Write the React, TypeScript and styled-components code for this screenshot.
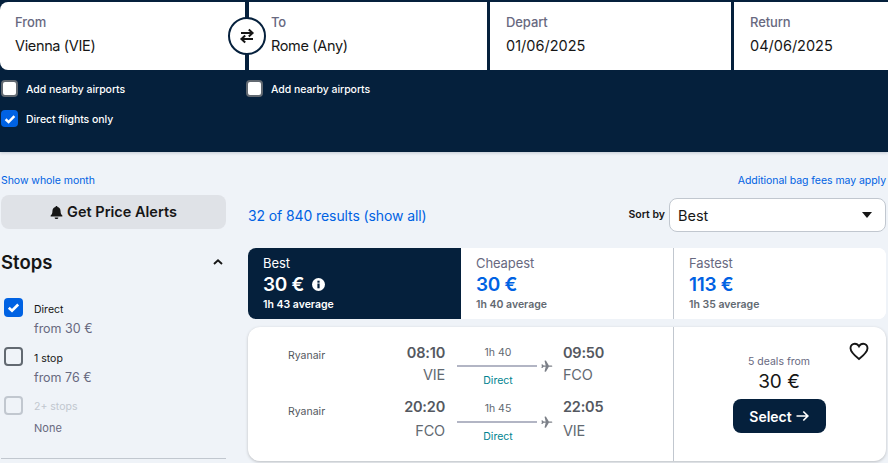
import styled, { createGlobalStyle } from "styled-components";

const GlobalStyle = createGlobalStyle`
  html, body {
    margin: 0;
    padding: 0;
    background: #ffffff;
  }
  body {
    font-family: Inter, "Noto Sans", "Liberation Sans", sans-serif;
    color: #161616;
  }
  * {
    box-sizing: border-box;
  }
`;

const fields = [
  { label: "From", value: "Vienna (VIE)", width: 245 },
  { label: "To", value: "Rome (Any)", width: 238 },
  { label: "Depart", value: "01/06/2025", width: 241 },
  { label: "Return", value: "04/06/2025", width: 154 },
];

const tabs = [
  { name: "Best", price: "30 €", average: "1h 43 average", active: true },
  { name: "Cheapest", price: "30 €", average: "1h 40 average", active: false },
  { name: "Fastest", price: "113 €", average: "1h 35 average", active: false },
];

const legs = [
  { depart: "08:10", from: "VIE", duration: "1h 40", arrive: "09:50", to: "FCO" },
  { depart: "20:20", from: "FCO", duration: "1h 45", arrive: "22:05", to: "VIE" },
];

const stops = [
  { name: "Direct", note: "from 30 €", state: "checked" },
  { name: "1 stop", note: "from 76 €", state: "open" },
  { name: "2+ stops", note: "None", state: "disabled" },
];

function CheckMark({ size }: { size: number }) {
  return (
    <svg width={size} height={size} viewBox="0 0 16 16" fill="none">
      <path d="M3 8.3l3.4 3.2L13 4.8" stroke="#fff" strokeWidth="2.8" />
    </svg>
  );
}

function Plane() {
  return (
    <svg width="12" height="12" viewBox="0 0 12 12" fill="#7c8088">
      <path d="M0.3 4.6l1-.3 1.5 1.2h2L3.6.6 5 .3l3 5.1h2.4c.7 0 1.3.3 1.3.7s-.6.7-1.3.7H8l-3 5-1.4-.3 1.2-4.8h-2L1.3 8 .3 7.7 1 6.1z" />
    </svg>
  );
}

export default function App() {
  return (
    <Page>
      <GlobalStyle />
      <Header>
        <Fields>
          {fields.map((field, i) => (
            <Field key={field.label} $width={field.width} $first={i === 0} $inset={i === 1 ? 22 : i === 0 ? 15 : 16}>
              <FieldLabel>{field.label}</FieldLabel>
              <FieldValue $tight={i < 2}>{field.value}</FieldValue>
            </Field>
          ))}
          <SwapButton>
            <svg width="18" height="18" viewBox="0 0 18 18" fill="none" stroke="#161616" strokeWidth="2">
              <path d="M3 6h11.5M10.8 2.4L14.6 6l-3.8 3.6" />
              <path d="M15 12H3.5M7.2 8.4L3.4 12l3.8 3.6" />
            </svg>
          </SwapButton>
        </Fields>
        <Options>
          <OptionColumn>
            <Option>
              <HeaderBox />
              <OptionText>Add nearby airports</OptionText>
            </Option>
            <Option>
              <HeaderBox $checked>
                <CheckMark size={14} />
              </HeaderBox>
              <OptionText>Direct flights only</OptionText>
            </Option>
          </OptionColumn>
          <OptionColumn>
            <Option>
              <HeaderBox />
              <OptionText>Add nearby airports</OptionText>
            </Option>
          </OptionColumn>
        </Options>
      </Header>
      <Main>
        <Sidebar>
          <SmallLink>Show whole month</SmallLink>
          <AlertButton>
            <svg width="13" height="15" viewBox="0 0 14 15" fill="#161616">
              <path d="M7 0.6c.7 0 1.1.5 1.1 1.1 2.2.5 3.3 2.3 3.3 4.4 0 2.4.8 3.6 1.9 4.7v1H.7v-1c1.1-1.1 1.9-2.3 1.9-4.7 0-2.1 1.1-3.9 3.3-4.4C5.9 1.1 6.3.6 7 .6zM5 12.9h4c0 1-.9 1.7-2 1.7s-2-.7-2-1.7z" />
            </svg>
            <AlertLabel>Get Price Alerts</AlertLabel>
          </AlertButton>
          <StopsHeader>
            <StopsTitle>Stops</StopsTitle>
            <svg width="12" height="12" viewBox="0 0 12 12" fill="none" stroke="#161616" strokeWidth="1.9">
              <path d="M2 8l4-3.7L10 8" />
            </svg>
          </StopsHeader>
          <StopList>
            {stops.map((stop) => (
              <StopRow key={stop.name}>
                <StopBox $state={stop.state}>
                  {stop.state === "checked" && <CheckMark size={15} />}
                </StopBox>
                <StopText $disabled={stop.state === "disabled"}>
                  <StopName $disabled={stop.state === "disabled"}>{stop.name}</StopName>
                  <StopNote $small={stop.state === "disabled"}>{stop.note}</StopNote>
                </StopText>
              </StopRow>
            ))}
          </StopList>
          <SideDivider />
        </Sidebar>
        <Results>
          <BagNotice>
            <SmallLink>Additional bag fees may apply</SmallLink>
          </BagNotice>
          <SummaryRow>
            <ResultCount>32 of 840 results (show all)</ResultCount>
            <SortGroup>
              <SortLabel>Sort by</SortLabel>
              <SortSelect>
                Best
                <svg width="10" height="6" viewBox="0 0 10 6" fill="#161616">
                  <path d="M0 0h10L5 6z" />
                </svg>
              </SortSelect>
            </SortGroup>
          </SummaryRow>
          <Tabs>
            {tabs.map((tab) => (
              <Tab key={tab.name} $active={tab.active}>
                <TabName $active={tab.active}>{tab.name}</TabName>
                <TabPrice $active={tab.active}>
                  {tab.price}
                  {tab.active && (
                    <svg width="13" height="13" viewBox="0 0 13 13">
                      <circle cx="6.5" cy="6.5" r="6.5" fill="#fff" />
                      <rect x="5.4" y="5.5" width="2.2" height="4.8" fill="#05203c" />
                      <rect x="5.4" y="2.7" width="2.2" height="2" fill="#05203c" />
                    </svg>
                  )}
                </TabPrice>
                <TabAverage $active={tab.active}>{tab.average}</TabAverage>
              </Tab>
            ))}
          </Tabs>
          <Card>
            <Legs>
              {legs.map((leg) => (
                <Leg key={leg.depart}>
                  <Airline>Ryanair</Airline>
                  <TimeColumn $end>
                    <Time>{leg.depart}</Time>
                    <Code>{leg.from}</Code>
                  </TimeColumn>
                  <Route>
                    <Duration>{leg.duration}</Duration>
                    <RouteLine>
                      <Line />
                      <Plane />
                    </RouteLine>
                    <DirectLabel>Direct</DirectLabel>
                  </Route>
                  <TimeColumn>
                    <Time>{leg.arrive}</Time>
                    <Code>{leg.to}</Code>
                  </TimeColumn>
                </Leg>
              ))}
            </Legs>
            <PricePanel>
              <FavouriteIcon width="20" height="19" viewBox="0 0 20 19" fill="none" stroke="#161616" strokeWidth="1.9">
                <path d="M10 17C5 13 1.5 10 1.5 6.2 1.5 3.5 3.5 1.7 5.8 1.7c1.8 0 3.3 1 4.2 2.6.9-1.6 2.4-2.6 4.2-2.6 2.3 0 4.3 1.8 4.3 4.5C18.5 10 15 13 10 17z" />
              </FavouriteIcon>
              <Deals>5 deals from</Deals>
              <Price>30 €</Price>
              <SelectButton>
                Select
                <svg width="13" height="12" viewBox="0 0 13 12" fill="none" stroke="#fff" strokeWidth="1.7">
                  <path d="M0.5 6h11M7.3 1.5L11.8 6l-4.500 4.500" />
                </svg>
              </SelectButton>
            </PricePanel>
          </Card>
        </Results>
      </Main>
    </Page>
  );
}

const Page = styled.div`
  width: 888px;
  height: 463px;
  overflow: hidden;
  background: #eff3f8;
`;

const Header = styled.header`
  height: 152px;
  padding-top: 2px;
  background: #05203c;
  box-shadow: 0 1px 3px rgba(5, 32, 60, 0.2);
`;

const Fields = styled.div`
  position: relative;
  display: flex;
  gap: 3px;
  height: 68px;
`;

const Field = styled.div<{ $width: number; $first: boolean; $inset: number }>`
  width: ${(p) => p.$width}px;
  padding: 12px 0 0 ${(p) => p.$inset}px;
  background: #ffffff;
  border-radius: ${(p) => (p.$first ? "8px 0 0 8px" : "0")};
  &:nth-child(2) {
    margin-left: 1px;
  }
`;

const FieldLabel = styled.div`
  font-size: 13px;
  line-height: 17px;
  font-weight: 500;
  letter-spacing: -0.1px;
  color: #68697f;
`;

const FieldValue = styled.div<{ $tight: boolean }>`
  margin-top: 5px;
  font-size: 14.5px;
  line-height: 20px;
  letter-spacing: ${(p) => (p.$tight ? "-0.35px" : "0")};
  color: #161616;
`;

const SwapButton = styled.div`
  position: absolute;
  left: 228px;
  top: 15px;
  width: 38px;
  height: 38px;
  display: flex;
  align-items: center;
  justify-content: center;
  background: #ffffff;
  border: 2px solid #05203c;
  border-radius: 50%;
`;

const Options = styled.div`
  display: flex;
  padding: 10px 0 0 1px;
`;

const OptionColumn = styled.div`
  width: 245px;
  display: flex;
  flex-direction: column;
  gap: 13px;
`;

const Option = styled.label`
  display: flex;
  align-items: center;
  gap: 8px;
  height: 17px;
`;

const OptionText = styled.span`
  padding-top: 2px;
  font-size: 10.5px;
  font-weight: 500;
  letter-spacing: -0.05px;
  color: #ffffff;
`;

const HeaderBox = styled.span<{ $checked?: boolean }>`
  width: 17px;
  height: 17px;
  display: flex;
  align-items: center;
  justify-content: center;
  border-radius: 4px;
  background: ${(p) => (p.$checked ? "#0062e3" : "#ffffff")};
  border: ${(p) => (p.$checked ? "none" : "2px solid #626971")};
`;

const Main = styled.main`
  display: flex;
  gap: 22px;
  padding: 22px 2px 0 1px;
`;

const Sidebar = styled.aside`
  width: 225px;
`;

const SmallLink = styled.div`
  height: 13px;
  font-size: 10.5px;
  line-height: 13px;
  letter-spacing: -0.05px;
  color: #0062e3;
`;

const AlertButton = styled.div`
  height: 34px;
  margin-top: 8px;
  display: flex;
  align-items: center;
  justify-content: center;
  gap: 4px;
  background: #dfe2e7;
  border-radius: 8px;
`;

const AlertLabel = styled.span`
  font-size: 14.5px;
  line-height: 16px;
  font-weight: 600;
`;

const StopsHeader = styled.div`
  margin-top: 21px;
  height: 24px;
  display: flex;
  align-items: center;
  justify-content: space-between;
  padding-right: 2px;
`;

const StopsTitle = styled.h3`
  margin: 0;
  font-size: 18.5px;
  font-weight: 600;
`;

const StopList = styled.div`
  margin-top: 24px;
  padding-left: 3px;
  display: flex;
  flex-direction: column;
  gap: 9px;
`;

const StopRow = styled.div`
  display: flex;
  gap: 11px;
  height: 40px;
`;

const StopBox = styled.span<{ $state: string }>`
  width: 19px;
  height: 19px;
  display: flex;
  align-items: center;
  justify-content: center;
  border-radius: 4px;
  background: ${(p) => (p.$state === "checked" ? "#0062e3" : "transparent")};
  border: ${(p) =>
    p.$state === "checked"
      ? "none"
      : p.$state === "open"
        ? "2px solid #626971"
        : "2px solid #c1c7cf"};
`;

const StopText = styled.div<{ $disabled: boolean }>`
  padding-top: ${(p) => (p.$disabled ? "4px" : "5px")};
`;

const StopName = styled.div<{ $disabled: boolean }>`
  font-size: 10.5px;
  line-height: 14px;
  color: ${(p) => (p.$disabled ? "#c1c7cf" : "#161616")};
`;

const StopNote = styled.div<{ $small: boolean }>`
  margin-top: ${(p) => (p.$small ? "6px" : "4px")};
  font-size: ${(p) => (p.$small ? "11px" : "12.5px")};
  line-height: 16px;
  color: #68697f;
`;

const SideDivider = styled.div`
  margin-top: 22px;
  height: 1px;
  background: #c1c7cf;
`;

const Results = styled.section`
  width: 638px;
`;

const BagNotice = styled.div`
  display: flex;
  justify-content: flex-end;
`;

const SummaryRow = styled.div`
  margin-top: 11px;
  height: 34px;
  display: flex;
  align-items: center;
  justify-content: space-between;
`;

const ResultCount = styled.div`
  font-size: 14px;
  letter-spacing: -0.1px;
  color: #0062e3;
`;

const SortGroup = styled.div`
  display: flex;
  align-items: center;
  gap: 4px;
`;

const SortLabel = styled.span`
  margin-top: -2px;
  font-size: 10.5px;
  font-weight: 600;
`;

const SortSelect = styled.div`
  width: 217px;
  height: 34px;
  padding: 0 13px 0 8px;
  display: flex;
  align-items: center;
  justify-content: space-between;
  font-size: 14.5px;
  background: #ffffff;
  border: 1px solid #c1c7cf;
  border-radius: 8px;
`;

const Tabs = styled.div`
  margin-top: 16px;
  height: 71px;
  display: grid;
  grid-template-columns: 213px 212px 213px;
  background: #ffffff;
  border-radius: 8px;
  overflow: hidden;
`;

const Tab = styled.div<{ $active: boolean }>`
  padding: 7px 0 0 15px;
  background: ${(p) => (p.$active ? "#05203c" : "#ffffff")};
  &:last-child {
    border-left: 1px solid #c1c7cf;
  }
`;

const TabName = styled.div<{ $active: boolean }>`
  font-size: 13px;
  line-height: 16px;
  letter-spacing: -0.1px;
  color: ${(p) => (p.$active ? "#ffffff" : "#68697f")};
`;

const TabPrice = styled.div<{ $active: boolean }>`
  margin-top: 1px;
  height: 24px;
  display: flex;
  align-items: center;
  gap: 8px;
  font-size: 19px;
  font-weight: 600;
  letter-spacing: -0.3px;
  color: ${(p) => (p.$active ? "#ffffff" : "#0062e3")};
`;

const TabAverage = styled.div<{ $active: boolean }>`
  margin-top: 2px;
  font-size: 10.5px;
  line-height: 14px;
  font-weight: 600;
  color: ${(p) => (p.$active ? "#ffffff" : "#626971")};
`;

const Card = styled.article`
  margin-top: 8px;
  height: 134px;
  display: flex;
  background: #ffffff;
  border-radius: 12px;
  box-shadow: 0 1px 3px rgba(37, 32, 31, 0.25);
`;

const Legs = styled.div`
  width: 425px;
  padding: 16px 0 0 40px;
`;

const Airline = styled.div`
  padding-top: 6px;
  font-size: 10.5px;
  color: #545860;
`;

const TimeColumn = styled.div<{ $end?: boolean }>`
  text-align: ${(p) => (p.$end ? "right" : "left")};
  margin-left: ${(p) => (p.$end ? "0" : "10px")};
`;

const Time = styled.div`
  font-size: 14.5px;
  line-height: 20px;
  font-weight: 600;
  letter-spacing: -0.2px;
  color: #545860;
`;

const Code = styled.div`
  margin-top: 2px;
  font-size: 14.5px;
  line-height: 20px;
  letter-spacing: -0.2px;
  color: #626971;
`;

const Leg = styled.div`
  height: 56px;
  display: grid;
  grid-template-columns: 100px 57px 108px auto;
  &:last-child ${Time} {
    margin-top: -2px;
  }
  &:last-child ${Code} {
    margin-top: 4px;
  }
`;

const Route = styled.div`
  margin-left: 12px;
  width: 96px;
  display: flex;
  flex-direction: column;
`;

const Duration = styled.div`
  width: 82px;
  text-align: center;
  font-size: 10.5px;
  line-height: 14px;
  padding-top: 3px;
  height: 17px;
  color: #626971;
`;

const RouteLine = styled.div`
  height: 12px;
  display: flex;
  align-items: center;
  gap: 4px;
`;

const Line = styled.span`
  width: 82px;
  height: 2px;
  background: #b2b5c4;
`;

const DirectLabel = styled.div`
  width: 82px;
  margin-top: 2px;
  text-align: center;
  font-size: 10.5px;
  line-height: 14px;
  color: #00838f;
`;

const PricePanel = styled.div`
  position: relative;
  flex: 1;
  padding: 28px 2px 0 0;
  display: flex;
  flex-direction: column;
  align-items: center;
  border-left: 1px solid #c1c7cf;
`;

const FavouriteIcon = styled.svg`
  position: absolute;
  top: 15px;
  right: 17px;
`;

const Deals = styled.div`
  font-size: 10.5px;
  line-height: 14px;
  color: #68697f;
`;

const Price = styled.div`
  margin-top: 1px;
  font-size: 19px;
  line-height: 24px;
`;

const SelectButton = styled.div`
  margin-top: 5px;
  width: 93px;
  height: 34px;
  display: flex;
  align-items: center;
  justify-content: center;
  gap: 4px;
  font-size: 14px;
  font-weight: 600;
  color: #ffffff;
  background: #05203c;
  border-radius: 8px;
`;
